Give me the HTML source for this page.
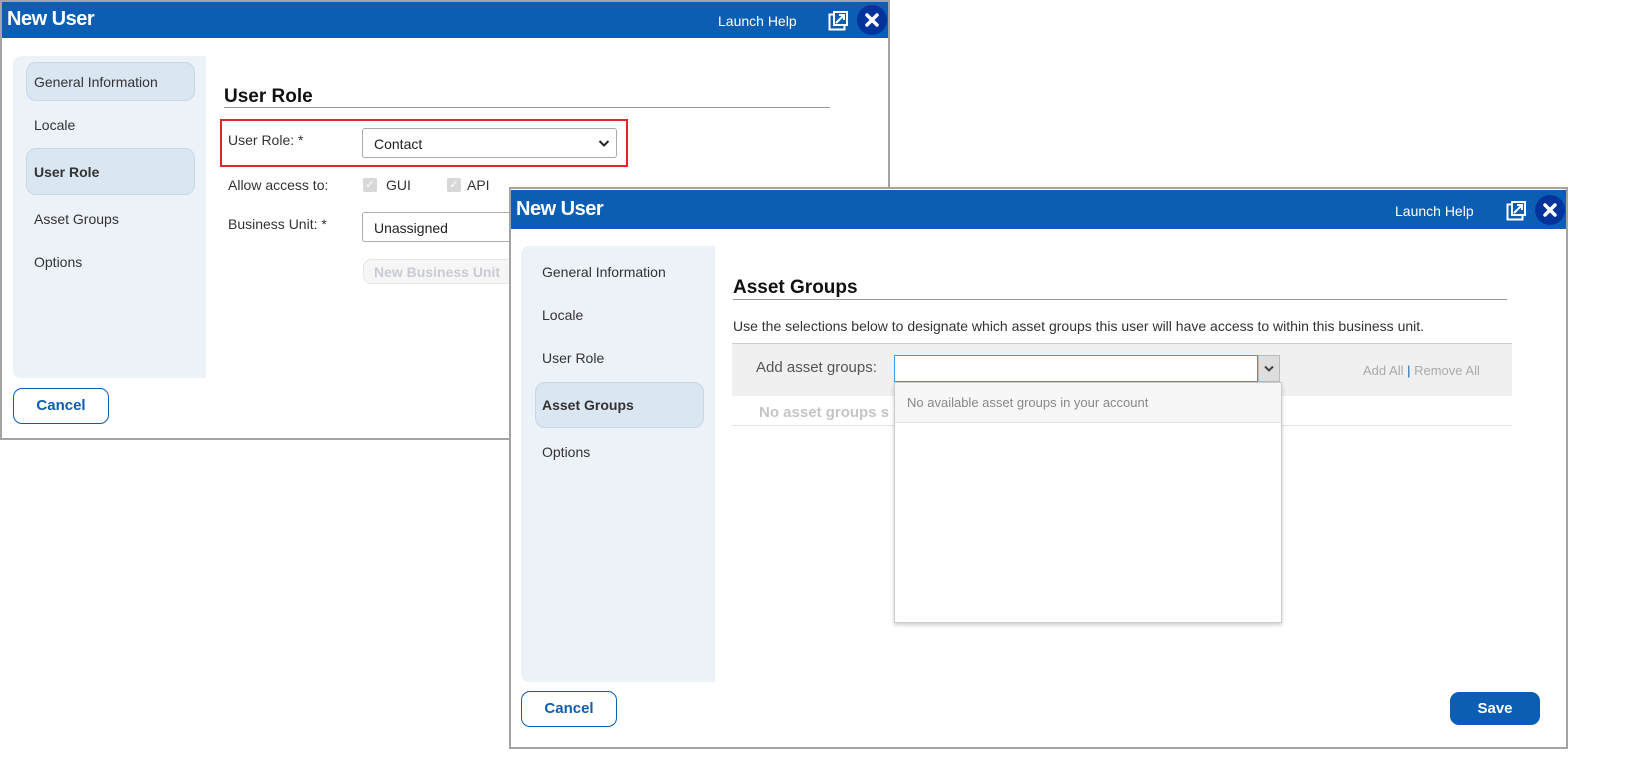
<!DOCTYPE html>
<html><head><style>
*{box-sizing:border-box;margin:0;padding:0}
body{width:1637px;height:781px;background:#fff;position:relative;overflow:hidden;font-family:"Liberation Sans",Arial,sans-serif;color:#333}
.a{position:absolute}
.win{position:absolute;border:2px solid #a3a3a3;background:#fff}
.hdr{position:absolute;left:0;right:0;top:0;background:#0b5eb3;color:#fff}
.ttl{position:absolute;left:5px;font-weight:bold;font-size:20px;letter-spacing:-0.5px}
.lh{position:absolute;font-size:14px}
.x{position:absolute;width:30px;height:30px;border-radius:50%;background:#02339a}
.side{position:absolute;background:#edf2f9;border-radius:8px 0 0 8px}
.nav{position:absolute;font-size:14px;color:#333}
.pill{position:absolute;background:#dbe6f3;border:1px solid #c7d7ea;border-radius:10px}
.btn{position:absolute;border:1px solid #0b5eb3;border-radius:9px;color:#0b5eb3;font-weight:bold;font-size:15px;text-align:center}
</style></head><body>

<!-- Window 1 -->
<div class="win" style="left:0;top:0;width:890px;height:440px">
 <div class="hdr" style="height:36px">
  <div class="ttl" style="top:6px">New User</div>
  <div class="lh" style="left:716px;top:11px">Launch Help</div>
  <svg class="a" style="left:826px;top:9px" width="20" height="20" viewBox="0 0 20 20"><rect x="1.5" y="3.5" width="15" height="15" fill="none" stroke="#fff" stroke-width="2"/><rect x="6" y="1" width="13" height="13" fill="#0b5eb3" stroke="#fff" stroke-width="2"/><path d="M8 12 L16 4 M11 4h5v5" stroke="#fff" stroke-width="2" fill="none"/></svg>
  <div class="x" style="left:855px;top:3px"><svg width="30" height="30" viewBox="0 0 30 30"><path d="M10 10L20 20M20 10L10 20" stroke="#fff" stroke-width="3.5" stroke-linecap="round"/></svg></div>
 </div>
 <div class="side" style="left:11px;top:54px;width:193px;height:322px"></div>
 <div class="pill" style="left:24px;top:60px;width:169px;height:39px"></div>
 <div class="nav" style="left:32px;top:72px">General Information</div>
 <div class="nav" style="left:32px;top:115px">Locale</div>
 <div class="pill" style="left:24px;top:146px;width:169px;height:47px"></div>
 <div class="nav" style="left:32px;top:162px;font-weight:bold">User Role</div>
 <div class="nav" style="left:32px;top:209px">Asset Groups</div>
 <div class="nav" style="left:32px;top:252px">Options</div>
 <div class="a" style="left:222px;top:84px;font-size:19px;font-weight:bold;color:#111">User Role</div>
 <div class="a" style="left:222px;top:105px;width:606px;height:1px;background:#999"></div>
 <div class="a" style="left:218px;top:117px;width:408px;height:48px;border:2px solid #e0262a"></div>
 <div class="a" style="left:226px;top:130px;font-size:14px">User Role: *</div>
 <div class="a" style="left:360px;top:126px;width:255px;height:30px;border:1px solid #aaa;border-radius:3px;font-size:14px;padding:7px 11px;color:#222">Contact<svg style="position:absolute;right:6px;top:10px" width="12" height="9" viewBox="0 0 12 9"><path d="M1.5 2L6 6.5L10.5 2" stroke="#222" stroke-width="2" fill="none"/></svg></div>
 <div class="a" style="left:226px;top:175px;font-size:14px">Allow access to:</div>
 <div class="a" style="left:361px;top:176px;width:14px;height:14px;background:#d8d8d8;border-radius:2px;color:#fff;font-size:11px;text-align:center">✓</div>
 <div class="a" style="left:384px;top:175px;font-size:14px">GUI</div>
 <div class="a" style="left:445px;top:176px;width:14px;height:14px;background:#d8d8d8;border-radius:2px;color:#fff;font-size:11px;text-align:center">✓</div>
 <div class="a" style="left:465px;top:175px;font-size:14px">API</div>
 <div class="a" style="left:226px;top:214px;font-size:14px">Business Unit: *</div>
 <div class="a" style="left:360px;top:210px;width:200px;height:30px;border:1px solid #aaa;border-radius:3px;font-size:14px;padding:7px 11px;color:#222">Unassigned</div>
 <div class="a" style="left:361px;top:257px;width:160px;height:25px;border:1px solid #e6e6e6;border-radius:8px;background:#f6f6f6;font-size:14px;font-weight:bold;color:#c8ccd2;padding:4px 10px">New Business Unit</div>
 <div class="btn" style="left:11px;top:386px;width:96px;height:36px;line-height:34px">Cancel</div>
</div>

<!-- Window 2 -->
<div class="win" style="left:509px;top:187px;width:1059px;height:562px">
 <div class="hdr" style="height:39px;top:1px">
  <div class="ttl" style="top:8px">New User</div>
  <div class="lh" style="left:884px;top:13px">Launch Help</div>
  <svg class="a" style="left:995px;top:11px" width="20" height="20" viewBox="0 0 20 20"><rect x="1.5" y="3.5" width="15" height="15" fill="none" stroke="#fff" stroke-width="2"/><rect x="6" y="1" width="13" height="13" fill="#0b5eb3" stroke="#fff" stroke-width="2"/><path d="M8 12 L16 4 M11 4h5v5" stroke="#fff" stroke-width="2" fill="none"/></svg>
  <div class="x" style="left:1024px;top:5px"><svg width="30" height="30" viewBox="0 0 30 30"><path d="M10 10L20 20M20 10L10 20" stroke="#fff" stroke-width="3.5" stroke-linecap="round"/></svg></div>
 </div>
 <div class="side" style="left:10px;top:57px;width:194px;height:436px"></div>
 <div class="nav" style="left:31px;top:75px">General Information</div>
 <div class="nav" style="left:31px;top:118px">Locale</div>
 <div class="nav" style="left:31px;top:161px">User Role</div>
 <div class="pill" style="left:24px;top:193px;width:169px;height:46px"></div>
 <div class="nav" style="left:31px;top:208px;font-weight:bold">Asset Groups</div>
 <div class="nav" style="left:31px;top:255px">Options</div>
 <div class="a" style="left:222px;top:88px;font-size:19px;font-weight:bold;color:#111">Asset Groups</div>
 <div class="a" style="left:222px;top:110px;width:774px;height:1px;background:#999"></div>
 <div class="a" style="left:222px;top:129px;font-size:14px;color:#333">Use the selections below to designate which asset groups this user will have access to within this business unit.</div>
 <div class="a" style="left:221px;top:154px;width:780px;height:53px;background:#f0f0f0;border-top:1px solid #ccc"></div>
 <div class="a" style="left:245px;top:170px;font-size:15px;color:#555">Add asset groups:</div>
 <div class="a" style="left:383px;top:166px;width:364px;height:27px;background:#fff;border:1px solid #3d9be0"></div>
 <div class="a" style="left:747px;top:166px;width:22px;height:27px;background:#ddd;border:1px solid #bbb"><svg style="position:absolute;left:5px;top:9px" width="10" height="8" viewBox="0 0 10 8"><path d="M1 1.5L5 5.5L9 1.5" stroke="#444" stroke-width="2" fill="none"/></svg></div>
 <div class="a" style="left:852px;top:174px;font-size:13px;color:#aaa">Add All <span style="color:#0b5eb3">|</span> Remove All</div>
 <div class="a" style="left:248px;top:215px;font-size:15px;font-weight:bold;color:#c5c5c5">No asset groups s</div>
 <div class="a" style="left:221px;top:236px;width:780px;height:1px;background:#e5e5e5"></div>
 <div class="a" style="left:383px;top:193px;width:388px;height:241px;background:#fff;border:1px solid #ccc;box-shadow:0 2px 4px rgba(0,0,0,.2)">
  <div style="height:40px;background:#f7f7f7;border-bottom:1px solid #e3e3e3;font-size:13px;color:#888;padding:12px 12px">No available asset groups in your account</div>
 </div>
 <div class="btn" style="left:10px;top:502px;width:96px;height:36px;line-height:34px">Cancel</div>
 <div class="btn" style="left:939px;top:503px;width:90px;height:33px;line-height:31px;background:#0b5eb3;color:#fff">Save</div>
</div>
</body></html>
